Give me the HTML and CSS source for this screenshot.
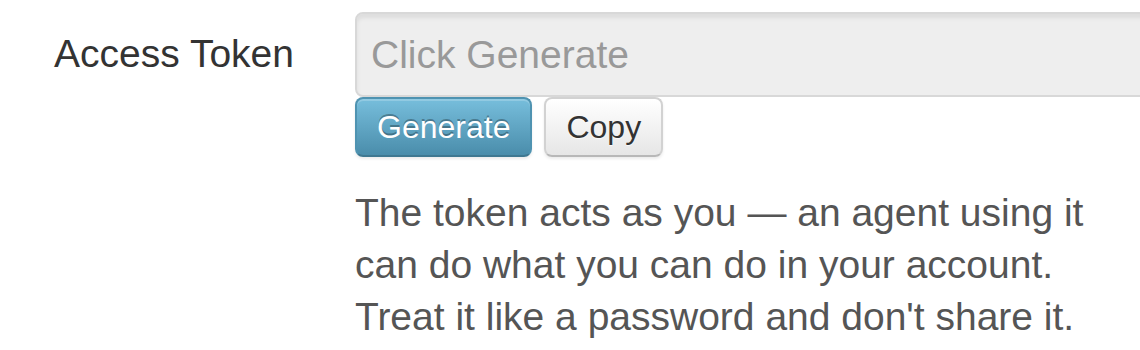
FILE: index.html
```html
<!DOCTYPE html>
<html lang="en">
<head>
    <meta charset="UTF-8">
    <meta name="viewport" content="width=device-width, initial-scale=1.0">
    <title>Access Token</title>
    <link rel="stylesheet" href="styles.css">
</head>
<body>
    <form class="token-form">
        <!-- Access token row -->
        <div class="control-group">
            <label class="control-label" for="accessToken">Access Token</label>
            <div class="controls">
                <input type="text" id="accessToken" class="token-input" placeholder="Click Generate" readonly>
                <div class="token-actions">
                    <button type="button" class="btn btn-info">Generate</button>
                    <button type="button" class="btn">Copy</button>
                </div>
                <p class="help-block">
                    The token acts as you — an agent using it<br>
                    can do what you can do in your account.<br>
                    Treat it like a password and don't share it.
                </p>
            </div>
        </div>
    </form>
</body>
</html>
```

FILE: styles.css
```css
/* ----- Global Reset ----- */
* {
    margin: 0;
    padding: 0;
    box-sizing: border-box;
    font-family: "Liberation Sans", Arial, Helvetica, sans-serif;
}

body {
    background: #fff;
    overflow: hidden;
}

/* ----- Form Layout ----- */
.token-form {
    padding-top: 12px;
    overflow: hidden;
}

.control-group {
    display: grid;
    grid-template-columns: 294px 1fr;
    column-gap: 61px;
}

.controls {
    margin-right: -40px;
}

.control-label {
    font-size: 39px;
    line-height: 84px;
    color: #333;
    text-align: right;
    white-space: nowrap;
}

/* ----- Token Input ----- */
.token-input {
    display: block;
    width: 100%;
    height: 85px;
    padding: 0 14px;
    font-size: 39px;
    color: #555;
    background: #eee;
    border: 2px solid #d8d8d8;
    border-radius: 8px;
    box-shadow: inset 0 4px 4px rgba(0, 0, 0, 0.075);
    outline: none;
}

.token-input::placeholder {
    color: #999;
}

/* ----- Buttons ----- */
.token-actions {
    display: flex;
    gap: 12px;
}

.btn {
    height: 60px;
    padding: 0 20px;
    font-size: 32px;
    color: #333;
    text-shadow: 0 1px 1px rgba(255, 255, 255, 0.75);
    background: linear-gradient(to bottom, #fff, #e6e6e6);
    border: 2px solid #d2d2d2;
    border-bottom-color: #b8b8b8;
    border-radius: 8px;
    box-shadow: inset 0 2px 0 rgba(255, 255, 255, 0.2), 0 2px 3px rgba(0, 0, 0, 0.08);
    cursor: pointer;
}

.btn-info {
    color: #fff;
    text-shadow: 0 -2px 0 rgba(0, 0, 0, 0.3);
    background: linear-gradient(to bottom, #77bedc, #4a8dab);
    border-color: #4f93b1;
    border-bottom-color: #3f7891;
}

/* ----- Help Text ----- */
.help-block {
    margin-top: 30px;
    font-size: 39px;
    line-height: 52px;
    color: #555;
    white-space: nowrap;
}
```
